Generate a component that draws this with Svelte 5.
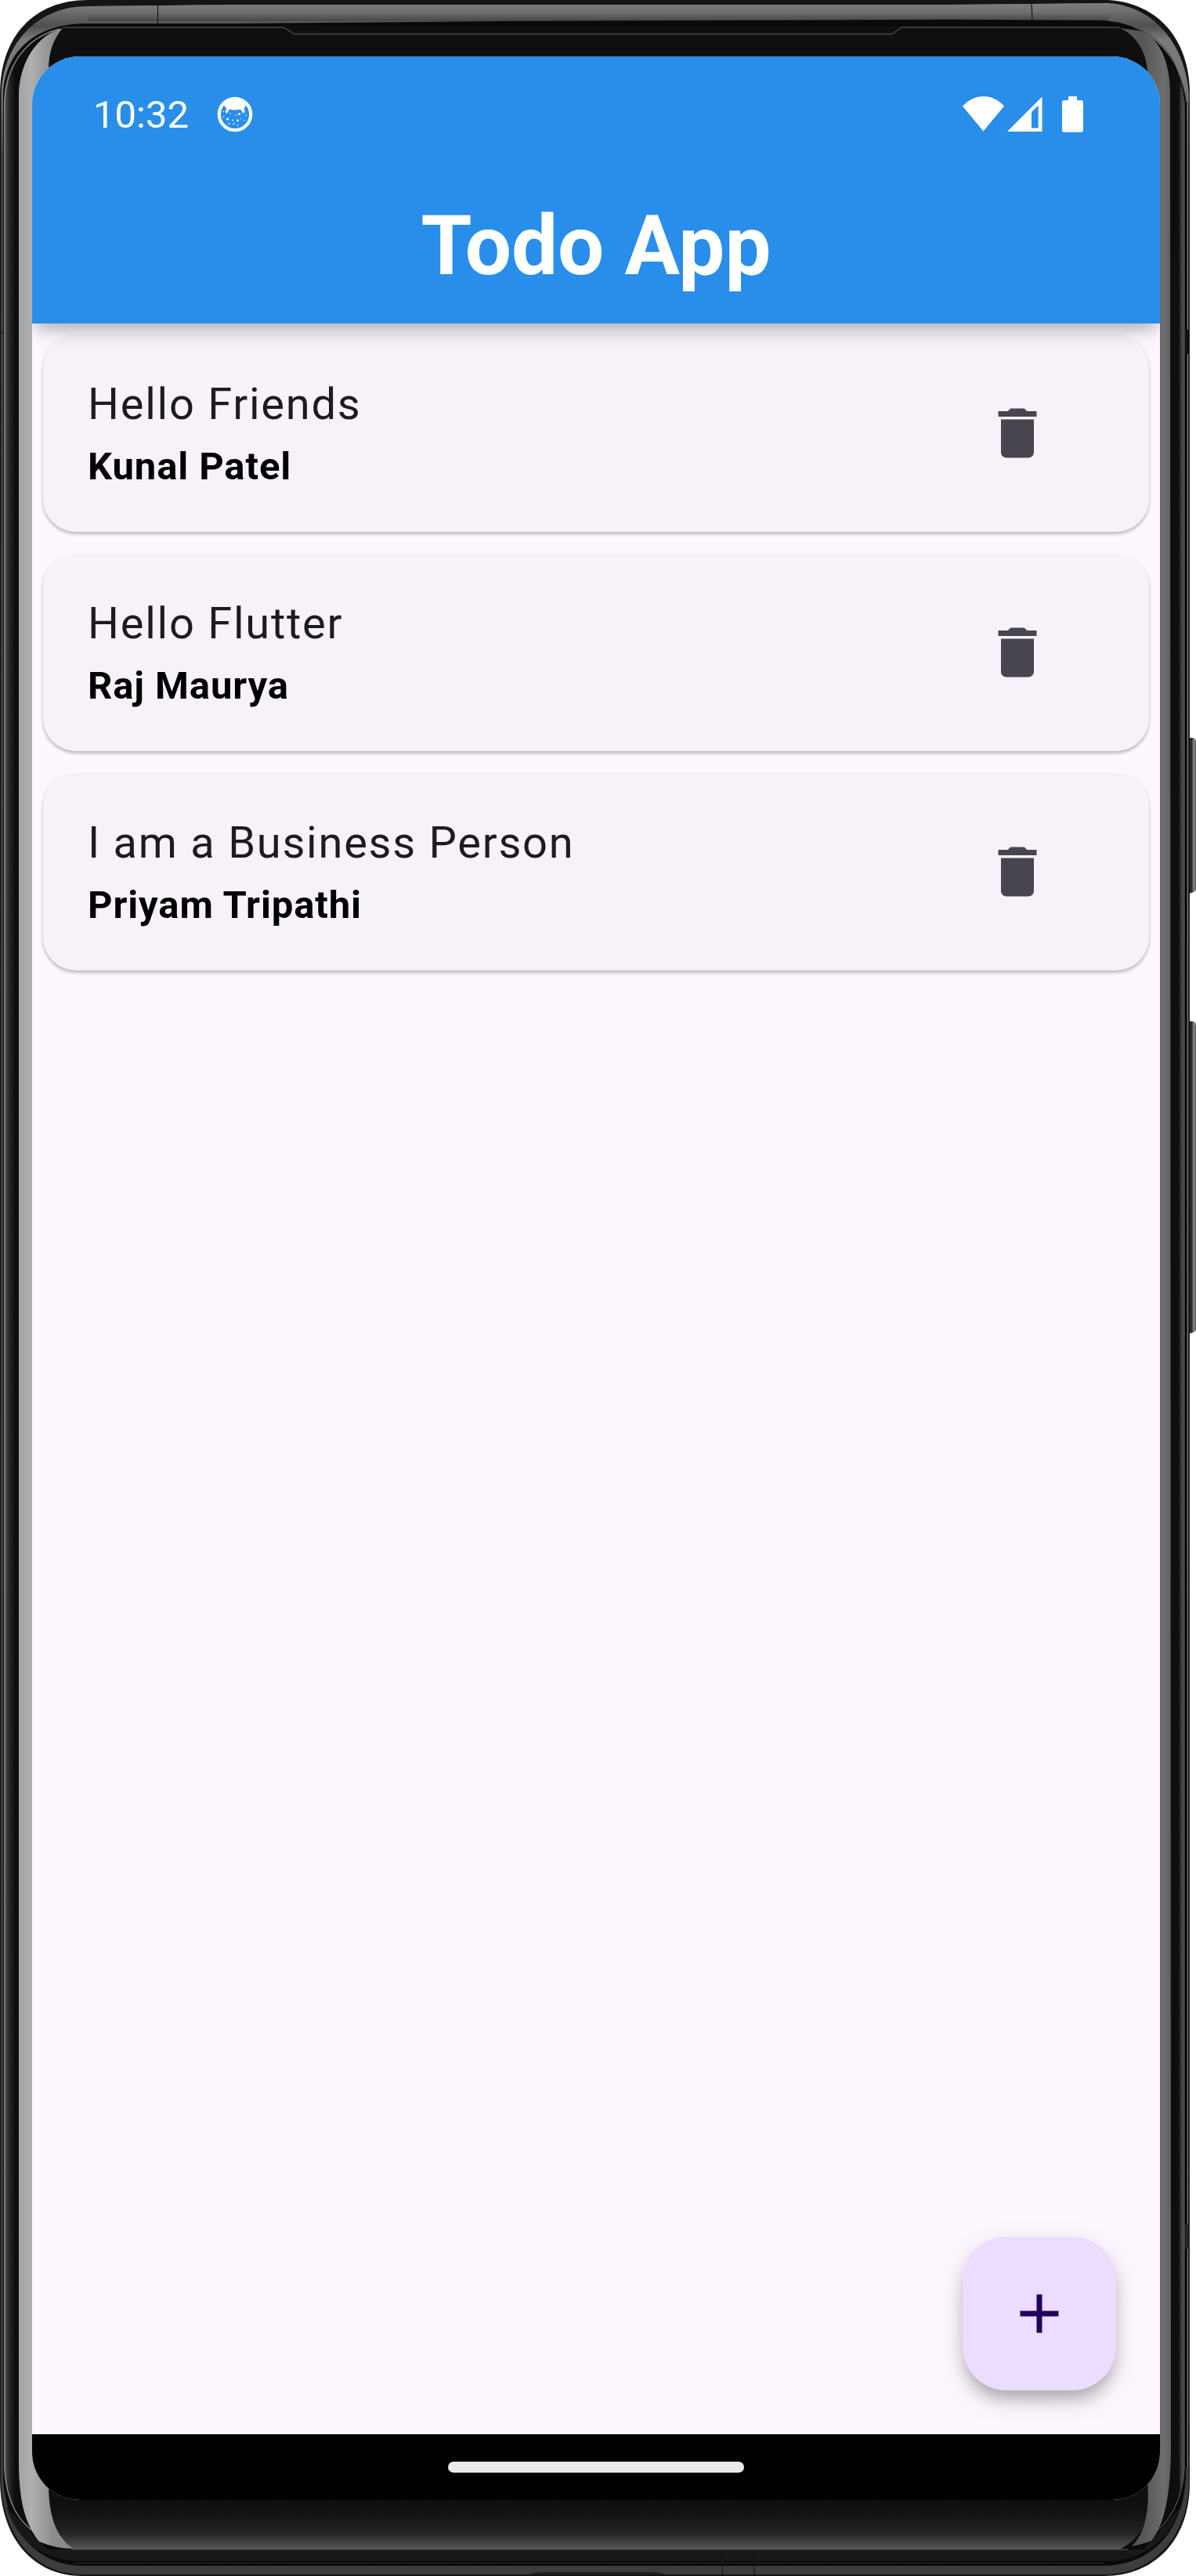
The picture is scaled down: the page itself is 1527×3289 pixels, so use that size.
<script>
  let todos = $state([
    { id: 1, title: 'Hello Friends', author: 'Kunal Patel' },
    { id: 2, title: 'Hello Flutter', author: 'Raj Maurya' },
    { id: 3, title: 'I am a Business Person', author: 'Priyam Tripathi' }
  ]);

  function remove(id) {
    todos = todos.filter((todo) => todo.id !== id);
  }
</script>

<div class="device">
  <svg class="frame" width="1527" height="3289" viewBox="0 0 1527 3289" aria-hidden="true">
    <defs>
      <linearGradient id="metal" x1="0" y1="0" x2="0" y2="1">
        <stop offset="0" stop-color="#7d7d7d" />
        <stop offset="0.009" stop-color="#505050" />
        <stop offset="0.014" stop-color="#7a7a7a" />
        <stop offset="0.03" stop-color="#777" />
        <stop offset="0.06" stop-color="#484848" />
        <stop offset="0.95" stop-color="#3a3a3a" />
        <stop offset="1" stop-color="#3d3d3d" />
      </linearGradient>
      <linearGradient id="topband" x1="0" y1="0" x2="0" y2="1">
        <stop offset="0" stop-color="#7d7d7d" />
        <stop offset="0.5" stop-color="#707070" />
        <stop offset="1" stop-color="#464646" />
      </linearGradient>
      <linearGradient id="glass" gradientUnits="userSpaceOnUse" x1="5" y1="0" x2="1515" y2="0">
        <stop offset="0" stop-color="#5e5e5e" />
        <stop offset="0.004" stop-color="#2c2c2c" />
        <stop offset="0.009" stop-color="#0e0e0e" />
        <stop offset="0.9935" stop-color="#0e0e0e" />
        <stop offset="0.996" stop-color="#484848" />
        <stop offset="0.998" stop-color="#3a3a3a" />
        <stop offset="1" stop-color="#1c1c1c" />
      </linearGradient>
      <linearGradient id="chin" x1="0" y1="0" x2="0" y2="1">
        <stop offset="0" stop-color="#0e0e0e" />
        <stop offset="0.35" stop-color="#141414" />
        <stop offset="0.7" stop-color="#272727" />
        <stop offset="1" stop-color="#575757" />
      </linearGradient>
      <linearGradient id="shineLeft" gradientUnits="userSpaceOnUse" x1="24" y1="0" x2="70" y2="0">
        <stop offset="0" stop-color="#a4a4a4" />
        <stop offset="0.35" stop-color="#b0b0b0" />
        <stop offset="1" stop-color="#8a8a8a" />
      </linearGradient>
      <linearGradient id="shineRight" gradientUnits="userSpaceOnUse" x1="1460" y1="0" x2="1494" y2="0">
        <stop offset="0" stop-color="#565656" />
        <stop offset="0.75" stop-color="#6d6d6d" />
        <stop offset="1" stop-color="#626262" />
      </linearGradient>
      <linearGradient id="key" gradientUnits="userSpaceOnUse" x1="1518" y1="0" x2="1527" y2="0">
        <stop offset="0" stop-color="#1c1c1c" />
        <stop offset="0.4" stop-color="#303030" />
        <stop offset="0.7" stop-color="#8c8c8c" />
        <stop offset="1" stop-color="#555" />
      </linearGradient>
    </defs>

    <!-- side keys -->
    <path fill="url(#key)" d="M1515 942H1523Q1527 943 1527 948V1136Q1526 1140 1515 1141ZM1515 1304H1523Q1527 1305 1527 1310V1698Q1526 1702 1515 1703Z" />

    <!-- body -->
    <path fill="#151515" d="M0 120C0 45 45 0 112 0H1415C1480 4 1519 52 1519 120V3170C1519 3245 1472 3289 1410 3289H105C42 3289 0 3240 0 3165Z" />
    <path fill="url(#metal)" d="M1.500 120C4 52 52 7 112 8L300 6H1210L1415 4C1476 8 1514 60 1518 120V3170C1516 3242 1470 3287 1410 3287H105C46 3287 3 3240 1 3165Z" />
    <path fill="url(#topband)" d="M112 8L300 6H1210L1415 4V27H112Z" />
    <path fill="#1f1f1f" d="M676 3287Q682 3284 694 3284H830Q842 3284 849 3287Z" />
    <path fill="#0a0a0a" d="M4 125C5 62 48 30 112 30H300L640 27L1210 25L1405 26C1470 28 1506 74 1514 125V3160C1512 3232 1470 3275 1410 3276H105C50 3276 6 3232 4 3160Z" />
    <path fill="none" stroke="#2e2e2e" d="M95 3272.500H1410" />
    <path fill="#181818" d="M8 3200L60 3255H1460L1508 3200C1492 3248 1455 3270 1410 3270H105C60 3270 22 3248 8 3200Z" />
    <path fill="url(#glass)" d="M5 130C6 66 50 33 112 33H1405C1470 33 1504 76 1512 130V3150C1508 3215 1465 3255 1400 3255H105C48 3255 8 3215 5 3150Z" />
    <path fill="none" stroke="#858585" stroke-width="1.500" d="M52 3238C22 3222 7 3190 6 3150V130C8 84 32 48 76 37" />
    <path fill="none" stroke="#6a6a6a" stroke-width="1" d="M1465 3240C1495 3222 1510 3190 1512 3150V130" />
    <path fill="none" stroke="#3a3a3a" stroke-width="1" d="M1512 130C1508 84 1488 52 1456 38" />
    <path fill="none" stroke="#000" stroke-width="1.500" d="M1514.500 130V3150" />
    <path fill="none" stroke="#777" stroke-width="1" d="M1516.500 130V3150" />
    <path fill="none" stroke="#111" stroke-width="1" d="M1518 130V3150M4.500 130V3150" />

    <!-- face -->
    <path fill="#0f0f0f" d="M24 118C28 66 58 36 112 34H1415C1468 36 1492 70 1494 118V3150C1492 3200 1460 3250 1400 3254H105C50 3240 26 3200 24 3150Z" />
    <path fill="url(#chin)" d="M50 3190H1475C1466 3225 1450 3244 1430 3255H92C68 3240 56 3215 50 3190Z" />
    <path fill="url(#shineLeft)" d="M24 118C26 78 48 44 80 36C68 50 62 66 62 90V3176C63 3210 70 3238 93 3254Q70 3254 50 3245C32 3222 25 3195 24 3150Z" />
    <path fill="url(#shineRight)" d="M1494 118C1494 72 1474 42 1454 39L1430 36C1452 46 1464 68 1465 92V3168C1468 3205 1462 3235 1445 3251Q1460 3248 1470 3244C1486 3224 1494 3190 1495 3130Z" />
    <path fill="none" stroke="#474747" stroke-width="1.300" d="M80 35H362L376 43.500H1139L1151 35H1430" />
    <path fill="none" stroke="#585858" stroke-width="1.200" d="M92 3255H1440" />

    <!-- antenna seams -->
    <path fill="none" stroke="#151515" stroke-width="1.200" d="M201.500 7V30M1317 4L1318 25M922.500 3256V3287M963 3256V3287M0 425H4" />
    <path fill="#111" d="M1513 421h6v31h-6z" />
    <path fill="#242424" d="M1513 2840h6v31h-6z" />
  </svg>

  <div class="screen">
    <header class="appbar">
      <div class="status">
        <span class="time">10:32</span>
        <svg class="debug" width="46" height="46" viewBox="0 0 46 46" fill="#fff">
          <circle cx="23" cy="23" r="20.200" fill="none" stroke="#fff" stroke-width="4.200" />
          <path d="M7.500 9C13 3.500 18 2 23 2s10 1.500 15.500 7L36.500 12.500 34.500 15.500l1.400 4.600-2.400 1.600-3.500-5.200Q23 18.500 16 16.500l-3 5.200-2.400-1.600 1.700-4.600L10 13Z" />
          <circle cx="8.500" cy="19.500" r=".8" /><circle cx="17" cy="22" r=".7" />
          <circle cx="24" cy="24" r=".7" /><circle cx="28.500" cy="22.500" r="1.400" />
          <circle cx="37" cy="24" r=".8" /><circle cx="8.500" cy="26" r=".7" />
          <circle cx="13.500" cy="29" r="1.500" /><circle cx="20" cy="30.500" r="1" />
          <circle cx="26.500" cy="31" r="1.400" /><circle cx="30.500" cy="28.500" r=".7" />
          <circle cx="35" cy="30.500" r=".7" /><circle cx="15.500" cy="35" r=".9" />
          <circle cx="21.500" cy="35" r=".9" /><circle cx="26.500" cy="37" r=".8" />
        </svg>
        <div class="signals">
          <svg width="53" height="46" viewBox="0 0 53 46" fill="#fff"><path d="M0 12.500Q11.500 0 26.500 0T53 12.500L26.500 44.500Z" /></svg>
          <svg width="45" height="46" viewBox="0 0 45 46" fill="#fff"><path fill-rule="evenodd" d="M0 45L44.500 .5V45ZM31 20V40.500H39.700V11.700Z" /></svg>
          <svg class="battery" width="27" height="46" viewBox="0 0 27 46" fill="#fff"><path d="M8 0H19V5H24.500Q27 5 27 7.500V43Q27 45.700 24.500 45.700H2.500Q0 45.700 0 43V7.500Q0 5 2.500 5H8Z" /></svg>
        </div>
      </div>
      <h1>Todo App</h1>
    </header>

    <main>
      {#each todos as todo (todo.id)}
        <article class="card">
          <div class="text">
            <p class="title">{todo.title}</p>
            <p class="author">{todo.author}</p>
          </div>
          <button class="delete" aria-label="Delete" onclick={() => remove(todo.id)}>
            <svg width="84" height="84" viewBox="0 0 24 24" fill="#49454e"><path d="M6 19c0 1.100.9 2 2 2h8c1.100 0 2-.9 2-2V7H6v12zM19 4h-3.500l-1-1h-5l-1 1H5v2h14V4z" /></svg>
          </button>
        </article>
      {/each}
      <button class="fab" aria-label="Add">
        <svg width="84" height="84" viewBox="0 0 24 24" fill="#21005d"><path d="M19 13h-6v6h-2v-6H5v-2h6V5h2v6h6v2z" /></svg>
      </button>
    </main>

    <nav><span class="handle"></span></nav>
  </div>

  <svg class="camera" width="88" height="88" viewBox="0 0 88 88" aria-hidden="true">
    <defs>
      <radialGradient id="lens">
        <stop offset="0" stop-color="#1a111c" />
        <stop offset="0.65" stop-color="#131320" />
        <stop offset="0.9" stop-color="#0b1c2b" />
        <stop offset="1" stop-color="#0b0d0e" />
      </radialGradient>
      <radialGradient id="glow">
        <stop offset="0" stop-color="#fbfbee" />
        <stop offset="0.2" stop-color="#9c9f94" />
        <stop offset="0.5" stop-color="#4c5049" stop-opacity="0.5" />
        <stop offset="1" stop-color="#222" stop-opacity="0" />
      </radialGradient>
      <radialGradient id="blue">
        <stop offset="0" stop-color="#d8f2ff" />
        <stop offset="0.3" stop-color="#3a86c0" />
        <stop offset="1" stop-color="#0c3a60" stop-opacity="0" />
      </radialGradient>
      <radialGradient id="pink">
        <stop offset="0" stop-color="#f3c4ee" />
        <stop offset="0.4" stop-color="#7a4f8c" />
        <stop offset="1" stop-color="#26345c" stop-opacity="0" />
      </radialGradient>
    </defs>
    <circle cx="44" cy="44" r="43.300" fill="#101211" />
    <circle cx="44.500" cy="43.500" r="20.500" fill="url(#lens)" />
    <circle cx="27.500" cy="37" r="10" fill="url(#glow)" />
    <circle cx="34.500" cy="40.500" r="5" fill="url(#pink)" />
    <circle cx="58" cy="48.500" r="6" fill="url(#blue)" />
  </svg>
</div>

<style>
  :global(body) {
    margin: 0;
    background: #fff;
  }

  .device {
    position: relative;
    box-sizing: border-box;
    width: 1527px;
    height: 3289px;
    padding: 72px 46px 97px 41px;
    font-family: Roboto, 'Liberation Sans', sans-serif;
  }

  .frame {
    position: absolute;
    inset: 0;
  }

  .camera {
    position: absolute;
    left: 717px;
    top: 100px;
  }

  .screen {
    position: relative;
    display: flex;
    flex-direction: column;
    height: 3120px;
    border-radius: 61px;
    overflow: hidden;
    background: #fef7ff;
  }

  .appbar {
    position: relative;
    z-index: 1;
    height: 341px;
    background: #298eea;
    color: #fff;
    box-shadow:
      0 14px 14px -6px rgba(0, 0, 0, 0.14),
      0 14px 28px -6px rgba(0, 0, 0, 0.18);
  }

  .status {
    display: flex;
    align-items: center;
    box-sizing: border-box;
    height: 145px;
    padding: 2px 98px 0 78px;
  }

  .time {
    width: 158px;
    font-size: 49px;
    line-height: 58px;
    padding-top: 2px;
  }

  .signals {
    display: flex;
    gap: 4px;
    margin-left: auto;
  }

  .battery {
    margin-left: 21px;
  }

  h1 {
    margin: 0;
    font-size: 105px;
    font-weight: 700;
    line-height: 196px;
    text-align: center;
  }

  main {
    flex: 1;
    display: flex;
    flex-direction: column;
    gap: 28px;
    padding: 14px;
  }

  .card {
    display: flex;
    box-sizing: border-box;
    height: 252px;
    padding: 47px 84px 0 57px;
    border-radius: 42px;
    background: #f7f2fa;
    box-shadow:
      0 3px 4px rgba(0, 0, 0, 0.22),
      0 2px 5px rgba(0, 0, 0, 0.06);
  }

  .text {
    flex: 1;
  }

  p {
    margin: 0;
  }

  .title {
    font-size: 56px;
    line-height: 84px;
    letter-spacing: 1.75px;
    color: #1d1b20;
  }

  .author {
    margin-top: 3px;
    font-size: 49px;
    font-weight: 700;
    line-height: 70px;
    letter-spacing: 0.875px;
    color: #000;
  }

  button {
    display: flex;
    align-items: center;
    justify-content: center;
    padding: 0;
    border: 0;
    background: none;
  }

  .delete {
    width: 168px;
    height: 158px;
  }

  .fab {
    width: 196px;
    height: 196px;
    margin: auto 42px 42px auto;
    border-radius: 56px;
    background: #eaddff;
    box-shadow:
      0 14px 18px -4px rgba(0, 0, 0, 0.2),
      0 12px 34px rgba(0, 0, 0, 0.17);
  }

  nav {
    display: flex;
    justify-content: center;
    align-items: center;
    height: 84px;
    background: #000;
  }

  .handle {
    width: 378px;
    height: 14px;
    border-radius: 7px;
    background: #ebebeb;
  }
</style>
